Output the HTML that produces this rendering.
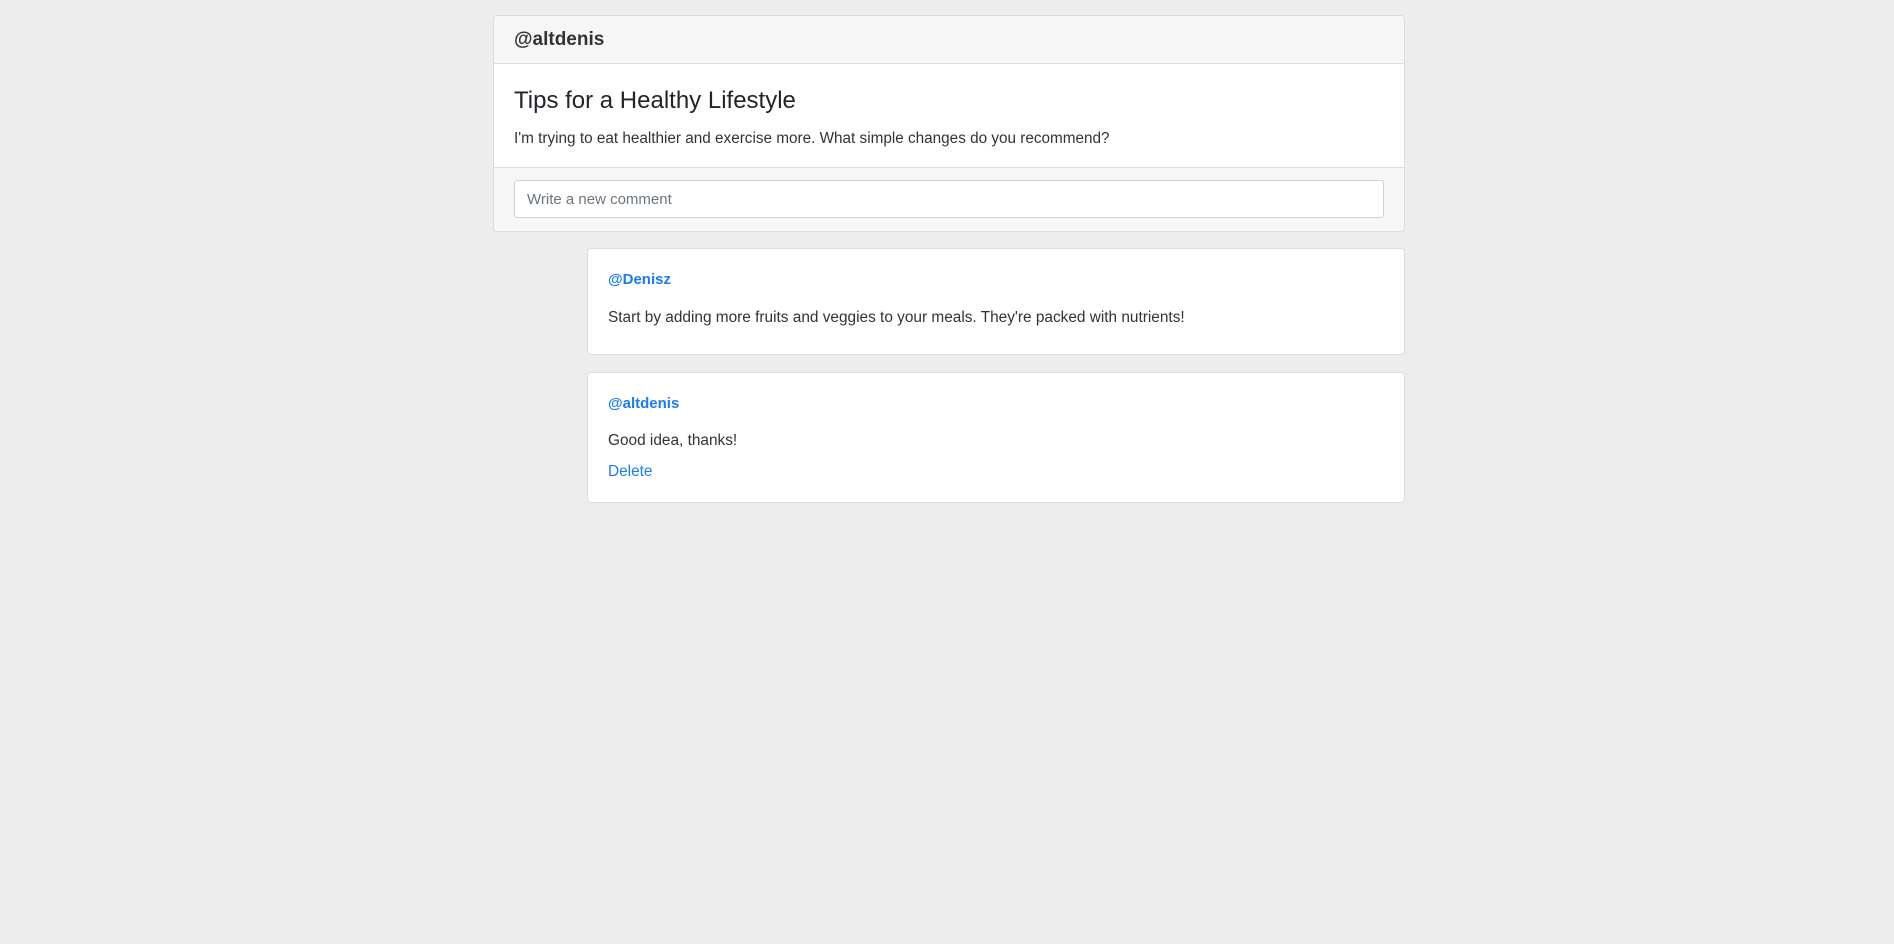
<!DOCTYPE html>
<html><head><meta charset="utf-8"><style>
body{margin:0;background:#ededed;font-family:"Liberation Sans",sans-serif;color:#212529;width:1894px;height:944px;position:relative;overflow:hidden}
.card{position:absolute;background:#fff;border:1px solid #dcdcdc;border-radius:4px;box-sizing:border-box}
.hdr{position:absolute;left:0;right:0;top:0;height:47px;background:#f6f6f6;border-bottom:1px solid #dcdcdc;border-radius:4px 4px 0 0}
.ftr{position:absolute;left:0;right:0;bottom:0;height:63px;background:#f6f6f6;border-top:1px solid #dcdcdc;border-radius:0 0 4px 4px}
.t{position:absolute;white-space:nowrap}
.inp{position:absolute;left:20px;right:20px;top:12px;height:38px;background:#fff;border:1px solid #ced4da;border-radius:3px;box-sizing:border-box}
a{color:#1a7cf2;text-decoration:none}
</style></head><body>
<div class="card" style="left:493px;top:15px;width:912px;height:217px">
  <div class="hdr"><div class="t" style="left:20px;top:13px;font-size:19px;font-weight:bold;color:#333">@altdenis</div></div>
  <div class="t" style="left:20px;top:71px;font-size:24px;color:#212529">Tips for a Healthy Lifestyle</div>
  <div class="t" style="left:20px;top:114px;font-size:15.3px;color:#333">I'm trying to eat healthier and exercise more. What simple changes do you recommend?</div>
  <div class="ftr"><div class="inp"><div class="t" style="left:12px;top:10px;font-size:15px;color:#6c757d">Write a new comment</div></div></div>
</div>
<div class="card" style="left:587px;top:248px;width:818px;height:107px">
  <div class="t" style="left:20px;top:22px;font-size:15px;font-weight:bold"><a>@Denisz</a></div>
  <div class="t" style="left:20px;top:60px;font-size:15.4px;color:#333">Start by adding more fruits and veggies to your meals. They're packed with nutrients!</div>
</div>
<div class="card" style="left:587px;top:372px;width:818px;height:131px">
  <div class="t" style="left:20px;top:22px;font-size:15px;font-weight:bold"><a>@altdenis</a></div>
  <div class="t" style="left:20px;top:59px;font-size:15.4px;color:#333">Good idea, thanks!</div>
  <div class="t" style="left:20px;top:90px;font-size:15.4px"><a>Delete</a></div>
</div>
</body></html>
